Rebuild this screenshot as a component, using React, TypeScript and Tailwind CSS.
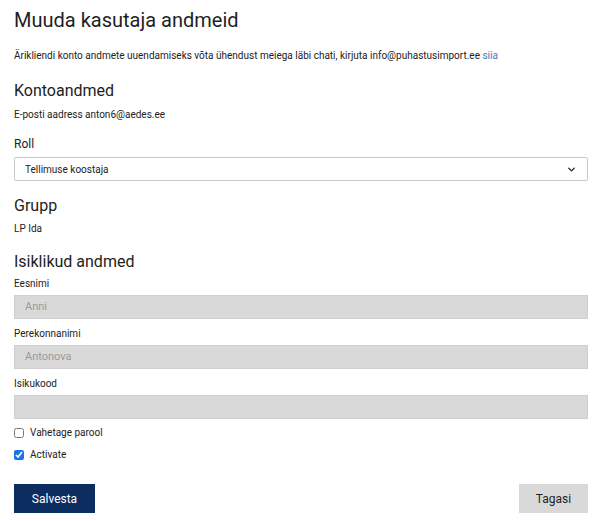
import { ChevronDown } from 'lucide-react';

const inputCls = 'h-[24px] w-full bg-[#d9d9d9] border border-[#cfcfcf] px-[10px] text-[11px] text-[#9a9a9a] flex items-center';

const App = () => {
  return (
    <div className="w-[602px] h-[521px] bg-white px-[14px] text-[#222]" style={{ fontFamily: 'Roboto, "Open Sans", sans-serif' }}>
      <h1 className="pt-[7px] text-[20px] leading-[26px] text-[#1f1f1f]">Muuda kasutaja andmeid</h1>
      <p className="mt-[16px] text-[10px] leading-[14px]">
        Ärikliendi konto andmete uuendamiseks võta ühendust meiega läbi chati, kirjuta info@puhastusimport.ee{' '}
        <span className="text-[#3a7bbf]">siia</span>
      </p>
      <h2 className="mt-[18px] text-[16px] leading-[20px]">Kontoandmed</h2>
      <p className="mt-[7px] text-[10px] leading-[14px]">E-posti aadress anton6@aedes.ee</p>
      <p className="mt-[14px] text-[12px] leading-[16px]">Roll</p>
      <div className="mt-[5px] h-[24px] w-full border border-[#c8c8c8] rounded-[2px] flex items-center justify-between px-[10px] text-[10px]">
        <span>Tellimuse koostaja</span>
        <ChevronDown className="w-[11px] h-[11px]" strokeWidth={3} />
      </div>
      <h2 className="mt-[15px] text-[16px] leading-[20px]">Grupp</h2>
      <p className="mt-[6px] text-[10px] leading-[14px]">LP Ida</p>
      <h2 className="mt-[16px] text-[16px] leading-[20px]">Isiklikud andmed</h2>
      <p className="mt-[5px] text-[10px] leading-[14px]">Eesnimi</p>
      <div className={`mt-[4px] ${inputCls}`}>Anni</div>
      <p className="mt-[8px] text-[10px] leading-[14px]">Perekonnanimi</p>
      <div className={`mt-[4px] ${inputCls}`}>Antonova</div>
      <p className="mt-[8px] text-[10px] leading-[14px]">Isikukood</p>
      <div className={`mt-[4px] ${inputCls}`}></div>
      <label className="mt-[7px] flex items-center gap-[6px] text-[10px] leading-[14px]">
        <input type="checkbox" className="w-[10px] h-[10px] m-0" />
        Vahetage parool
      </label>
      <label className="mt-[8px] flex items-center gap-[6px] text-[10px] leading-[14px]">
        <input type="checkbox" defaultChecked className="w-[10px] h-[10px] m-0 accent-[#1a73e8]" />
        Activate
      </label>
      <div className="mt-[22px] flex justify-between">
        <button className="w-[81px] h-[29px] bg-[#0b2d5f] text-white text-[12px]">Salvesta</button>
        <button className="w-[69px] h-[29px] bg-[#d9d9d9] text-[#222] text-[12px]">Tagasi</button>
      </div>
    </div>
  );
};

export default App;
